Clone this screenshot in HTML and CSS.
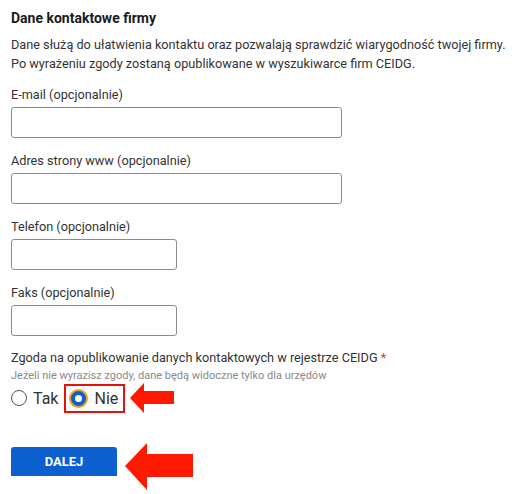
FILE: index.html
```html
<!DOCTYPE html>
<html lang="pl">
<head>
<meta charset="utf-8">
<link rel="stylesheet" href="styles.css">
</head>
<body>
<form class="form">
  <h2 class="title">Dane kontaktowe firmy</h2>
  <p class="desc">Dane służą do ułatwienia kontaktu oraz pozwalają sprawdzić wiarygodność twojej firmy. Po wyrażeniu zgody zostaną opublikowane w wyszukiwarce firm CEIDG.</p>

  <div class="field">
    <label class="label">E-mail (opcjonalnie)</label>
    <input class="input input-wide" type="text">
  </div>
  <div class="field">
    <label class="label">Adres strony www (opcjonalnie)</label>
    <input class="input input-wide" type="text">
  </div>
  <div class="field">
    <label class="label">Telefon (opcjonalnie)</label>
    <input class="input input-narrow" type="text">
  </div>
  <div class="field">
    <label class="label">Faks (opcjonalnie)</label>
    <input class="input input-narrow" type="text">
  </div>

  <div class="consent">
    <div class="label">Zgoda na opublikowanie danych kontaktowych w rejestrze CEIDG <span class="req">*</span></div>
    <div class="hint">Jeżeli nie wyrazisz zgody, dane będą widoczne tylko dla urzędów</div>
    <div class="radios">
      <label class="radio"><span class="dot"></span><span>Tak</span></label>
      <label class="radio radio-marked"><span class="dot dot-on"></span><span>Nie</span></label>
      <svg class="arrow arrow-small" width="46" height="32" viewBox="0 0 46 32"><polygon points="0,16 14,1 14,9 44,9 44,22 14,22 14,31" fill="#fd1a00"/></svg>
    </div>
  </div>

  <div class="actions">
    <button class="btn" type="button">DALEJ</button>
    <svg class="arrow arrow-big" width="70" height="48" viewBox="0 0 70 48"><polygon points="0,23 22,0 22,11 68,11 68,34 22,34 22,47" fill="#fd1a00"/></svg>
  </div>
</form>
</body>
</html>
```
FILE: styles.css
```css
html, body {
  margin: 0;
  padding: 0;
  background: #ffffff;
}
body {
  font-family: Roboto, "Liberation Sans", Arial, sans-serif;
  color: #333333;
}
.form {
  padding: 8px 0 0 11px;
}
.title {
  margin: 0;
  font-size: 14px;
  line-height: 20px;
  font-weight: 700;
  color: #1b1b1b;
}
.desc {
  margin: 7px 0 0;
  font-size: 12.7px;
  line-height: 19px;
  color: #333333;
}
.field {
  display: flex;
  flex-direction: column;
  margin-top: 13px;
}
.field + .field {
  margin-top: 14px;
}
.label {
  font-size: 12.7px;
  line-height: 18px;
  color: #333333;
}
.input {
  margin-top: 3px;
  height: 31px;
  box-sizing: border-box;
  border: 1px solid #8c8c8c;
  border-radius: 3px;
  background: #fff;
  padding: 0 8px;
}
.input-wide { width: 331px; }
.input-narrow { width: 166px; }
.consent {
  margin-top: 13px;
}
.req { color: #e0303a; }
.hint {
  font-size: 11px;
  line-height: 14px;
  color: #8a8a8a;
  margin-top: 2px;
}
.radios {
  display: flex;
  align-items: center;
  margin-top: 0;
  height: 30px;
}
.radio {
  display: flex;
  align-items: center;
  gap: 6px;
  font-size: 16px;
  color: #333;
  height: 29px;
  box-sizing: border-box;
}
.radio-marked {
  margin-left: 6px;
  border: 2px solid #e3130f;
  padding: 0 5px 0 4px;
  width: 61px;
}
.dot {
  width: 16px;
  height: 16px;
  box-sizing: border-box;
  border: 1.5px solid #555;
  border-radius: 50%;
  background: #fff;
}
.dot-on {
  width: 15px;
  height: 15px;
  border: 4px solid #0f5ecb;
  background: #fff;
  box-shadow: 0 0 0 2px #f0a020;
  margin-left: 1px;
  margin-right: 2px;
}
.arrow-small {
  margin-left: 5px;
}
.actions {
  display: flex;
  align-items: flex-start;
  margin-top: 30px;
}
.btn {
  width: 106px;
  height: 29px;
  margin-top: 4px;
  border: none;
  border-radius: 3px 3px 0 0;
  background: #0b5fce;
  color: #fff;
  font-family: Roboto, "Liberation Sans", Arial, sans-serif;
  font-weight: 700;
  font-size: 13px;
}
.arrow-big {
  margin-left: 8px;
}
```
